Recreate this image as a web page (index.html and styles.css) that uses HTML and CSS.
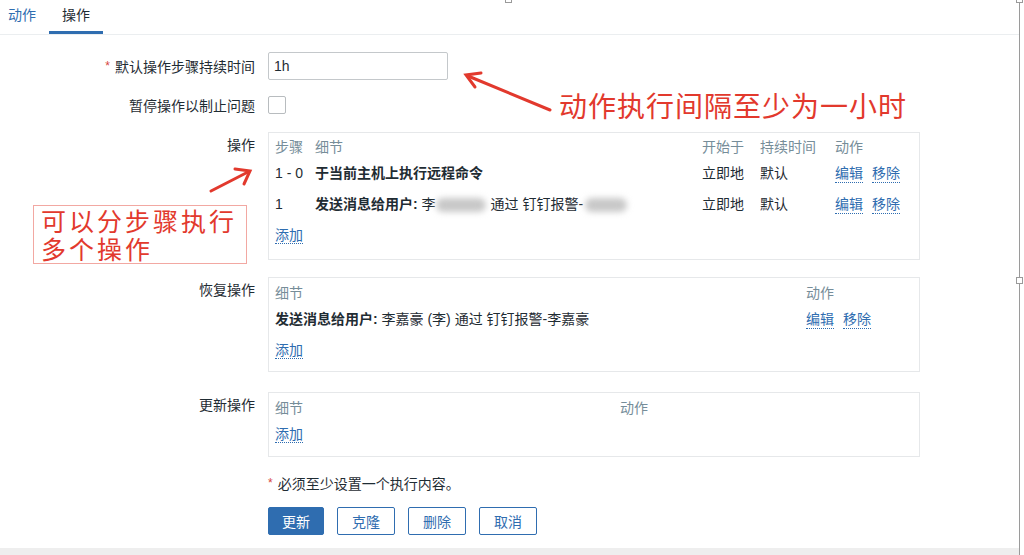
FILE: index.html
```html
<!DOCTYPE html>
<html lang="zh-CN">

<head>
    <meta charset="UTF-8">
    <title>操作</title>
    <link rel="stylesheet" href="styles.css">
</head>

<body>

    <div class="page">

        <div class="tabs">
            <a class="tab">动作</a>
            <a class="tab active">操作</a>
        </div>

        <div class="form">

            <div class="row">
                <label class="lbl"><span class="req">*</span>默认操作步骤持续时间</label>
                <input class="inp" type="text" value="1h">
            </div>

            <div class="row row-check">
                <label class="lbl">暂停操作以制止问题</label>
                <span class="check"></span>
            </div>

            <div class="row row-top">
                <label class="lbl lbl-top">操作</label>
                <div class="box box-ops">
                    <div class="grid ops">
                        <div class="th">步骤</div>
                        <div class="th">细节</div>
                        <div class="th">开始于</div>
                        <div class="th">持续时间</div>
                        <div class="th">动作</div>

                        <div class="td">1 - 0</div>
                        <div class="td"><b>于当前主机上执行远程命令</b></div>
                        <div class="td">立即地</div>
                        <div class="td">默认</div>
                        <div class="td links"><a class="lnk">编辑</a><a class="lnk">移除</a></div>

                        <div class="td">1</div>
                        <div class="td"><b>发送消息给用户:</b> 李<span class="blur b1"></span>通过 钉钉报警-<span class="blur b2"></span></div>
                        <div class="td">立即地</div>
                        <div class="td">默认</div>
                        <div class="td links"><a class="lnk">编辑</a><a class="lnk">移除</a></div>
                    </div>
                    <div class="add"><a class="lnk">添加</a></div>
                </div>
            </div>

            <div class="row row-top">
                <label class="lbl lbl-top">恢复操作</label>
                <div class="box">
                    <div class="grid rec">
                        <div class="th">细节</div>
                        <div class="th">动作</div>

                        <div class="td"><b>发送消息给用户:</b> 李嘉豪 (李) 通过 钉钉报警-李嘉豪</div>
                        <div class="td links"><a class="lnk">编辑</a><a class="lnk">移除</a></div>
                    </div>
                    <div class="add"><a class="lnk">添加</a></div>
                </div>
            </div>

            <div class="row row-top">
                <label class="lbl lbl-top">更新操作</label>
                <div class="box box-upd">
                    <div class="grid upd">
                        <div class="th">细节</div>
                        <div class="th">动作</div>
                    </div>
                    <div class="add"><a class="lnk">添加</a></div>
                </div>
            </div>

            <div class="row row-note">
                <div class="lbl"></div>
                <div class="note"><span class="req">*</span>必须至少设置一个执行内容。</div>
            </div>

            <div class="row row-btns">
                <div class="lbl"></div>
                <div class="btns">
                    <button class="btn primary">更新</button>
                    <button class="btn">克隆</button>
                    <button class="btn">删除</button>
                    <button class="btn">取消</button>
                </div>
            </div>

        </div>

        <div class="footer"></div>

        <!-- screenshot annotations -->
        <div class="note-red note-top">动作执行间隔至少为一小时</div>
        <div class="note-red note-box">可以分步骤执行<br>多个操作</div>

        <svg class="arrows" width="1024" height="555" viewBox="0 0 1024 555">
            <g stroke="#e2392d" stroke-width="3" stroke-linecap="round" fill="none">
                <line x1="550" y1="110" x2="468" y2="76" />
                <polyline points="481,73 466,75 475,87" />
                <line x1="211" y1="191" x2="248" y2="172" />
                <polyline points="235,169 250,171 244,184" />
            </g>
        </svg>

        <span class="handle h1"></span>
        <span class="handle h2"></span>
        <span class="handle h3"></span>
    </div>

</body>

</html>
```

FILE: styles.css
```css
html,
body {
    margin: 0;
    height: 555px;
    overflow: hidden;
    background: #fff;
}

body {
    font-family: "Liberation Sans", "Noto Sans CJK SC", sans-serif;
    font-size: 14px;
    color: #1f2c33;
}

.page {
    position: relative;
    width: 1019px;
    height: 555px;
    border-right: 1px solid #9a9a9a;
    display: flex;
    flex-direction: column;
}

/* tabs */

.tabs {
    display: flex;
    height: 34px;
    border-bottom: 1px solid #ebeef0;
    margin-left: -5px;
}

.tab {
    padding: 0 13px;
    line-height: 31px;
    color: #2f6db0;
    border-bottom: 3px solid transparent;
}

.tab.active {
    color: #1f2c33;
    border-bottom-color: #2f6db0;
}

/* form */

.form {
    padding-top: 17px;
    display: flex;
    flex-direction: column;
}

.row {
    display: flex;
    align-items: center;
    gap: 13px;
}

.lbl {
    width: 255px;
    flex: none;
    text-align: right;
}

.req {
    color: #d64541;
    margin-right: 5px;
    font-size: 12px;
    vertical-align: 2px;
}

.inp {
    width: 168px;
    height: 26px;
    padding: 0 5px;
    border: 1px solid #c4c8cb;
    border-radius: 2px;
    font: inherit;
    color: #1f2c33;
    margin: 0;
}

.row-check {
    margin-top: 15px;
}

.check {
    width: 16px;
    height: 16px;
    border: 1px solid #b8bcbf;
    border-radius: 2px;
}

.row-top {
    align-items: flex-start;
    margin-top: 17px;
}

.row-top + .row-top {
    margin-top: 17px;
}

.row-top + .row-top + .row-top {
    margin-top: 20px;
}

.lbl-top {
    line-height: 26px;
}

.box {
    width: 638px;
    border: 1px solid #e6e8ea;
    padding: 4px 6px 6px 6px;
}

.box-ops {
    padding-top: 3px;
    padding-bottom: 9px;
}

.box-upd {
    padding-bottom: 7px;
}

.grid {
    display: grid;
    align-items: center;
}

.ops {
    grid-template-columns: 40px 387px 58px 75px auto;
}

.rec {
    grid-template-columns: 531px auto;
}

.upd {
    grid-template-columns: 345px auto;
}

.th {
    color: #768d99;
    line-height: 22px;
}

.td {
    line-height: 31px;
    white-space: nowrap;
}

.td b {
    font-weight: bold;
}

.links {
    display: flex;
    gap: 9px;
}

.lnk {
    color: #2f6db0;
    border-bottom: 1px dotted #2f6db0;
    line-height: 18px;
}

.add {
    line-height: 30px;
}

.blur {
    display: inline-block;
    vertical-align: middle;
    height: 14px;
    background: #c8c8c8;
    border-radius: 8px;
    filter: blur(3px);
}

.b1 {
    width: 50px;
    margin: 0 5px 0 0;
}

.b2 {
    width: 42px;
    margin-left: 2px;
}

.row-note {
    margin-top: 16px;
}

.note {
    line-height: 20px;
}

.row-btns {
    margin-top: 13px;
}

.btns {
    display: flex;
    gap: 13px;
}

.btn {
    height: 28px;
    width: 58px;
    margin: 0;
    padding: 0;
    border: 1px solid #2f6db0;
    border-radius: 2px;
    background: #fff;
    color: #2f6db0;
    font: inherit;
}

.btn.primary {
    width: 56px;
    background: #2f6db0;
    color: #fff;
}

.footer {
    margin-top: auto;
    height: 7px;
    background: #eeeeee;
}

/* annotations */

.note-red {
    position: absolute;
    color: #e2392d;
    font-family: "Noto Sans CJK SC", sans-serif;
    font-size: 28px;
}

.note-top {
    left: 559px;
    top: 86px;
    line-height: 38px;
    letter-spacing: 1px;
}

.note-box {
    left: 33px;
    top: 205px;
    width: 202px;
    height: 57px;
    padding-left: 7px;
    padding-right: 3px;
    border: 1px solid #f2a8a2;
    font-size: 25px;
    line-height: 28px;
    letter-spacing: 3px;
}

.arrows {
    position: absolute;
    left: 0;
    top: 0;
    pointer-events: none;
}

.handle {
    position: absolute;
    width: 5px;
    height: 5px;
    border: 1px solid #9a9a9a;
    background: #fff;
}

.h1 {
    left: 505px;
    top: -4px;
}

.h2 {
    left: 1016px;
    top: -4px;
}

.h3 {
    left: 1016px;
    top: 277px;
}
```
